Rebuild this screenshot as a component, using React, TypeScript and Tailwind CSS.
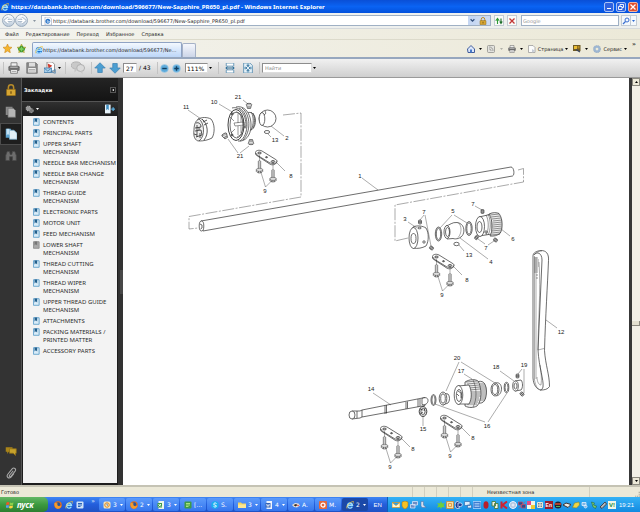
import type { ReactNode } from "react";

const UI = "font-['DejaVu_Sans','Liberation_Sans',sans-serif]";

const bookmarks = [
  "CONTENTS",
  "PRINCIPAL PARTS",
  "UPPER SHAFT MECHANISM",
  "NEEDLE BAR MECHANISM",
  "NEEDLE BAR CHANGE MECHANISM",
  "THREAD GUIDE MECHANISM",
  "ELECTRONIC PARTS",
  "MOTOR UNIT",
  "FEED MECHANISM",
  "LOWER SHAFT MECHANISM",
  "THREAD CUTTING MECHANISM",
  "THREAD WIPER MECHANISM",
  "UPPER THREAD GUIDE MECHANISM",
  "ATTACHMENTS",
  "PACKING MATERIALS / PRINTED MATTER",
  "ACCESSORY PARTS",
];
const CURRENT = "LOWER SHAFT MECHANISM";

/* ---------- small icons ---------- */

function Ico({ children, className = "size-2" }: { children: ReactNode; className?: string }) {
  return (
    <svg viewBox="0 0 16 16" className={`${className} shrink-0`} aria-hidden="true">
      {children}
    </svg>
  );
}

function IeLogo({ className = "size-2" }: { className?: string }) {
  return (
    <Ico className={className}>
      <circle cx="8" cy="8.500" r="6.500" fill="#1d6fd0" />
      <path d="M12.500 11.500A5 5 0 1 1 13 8.500H4.500" fill="none" stroke="#9fdcff" strokeWidth="2.600" />
      <path d="M2 15C-1 12 6 2 14.500 1c1.500 0 1.500 2 .3 4" fill="none" stroke="#f5c63c" strokeWidth="1.500" />
    </Ico>
  );
}

function IePage() {
  return (
    <Ico>
      <path d="M2 0h9l4 4v12H2z" fill="#fff" stroke="#8a93a8" />
      <path d="M11 10.500A3.800 3.800 0 1 1 11.500 8H5" fill="none" stroke="#2673c8" strokeWidth="2.400" />
    </Ico>
  );
}

function Lock({ className = "size-2" }: { className?: string }) {
  return (
    <Ico className={className}>
      <path d="M4.500 8V4.500a3.500 3.500 0 0 1 7 0V8" fill="none" stroke="#b98d2a" strokeWidth="2" />
      <rect x="2" y="7" width="12" height="8.500" rx="1" fill="#d7a632" stroke="#8f6a19" />
      <path d="M8 9.500v3.500" stroke="#6b4c10" strokeWidth="1.600" />
    </Ico>
  );
}

function Printer({ className = "size-3" }: { className?: string }) {
  return (
    <Ico className={className}>
      <path d="M4 1h8v5H4z" fill="#eee" stroke="#666" />
      <rect x="0.500" y="5" width="15" height="7" rx="2" fill="#6d6d6d" />
      <path d="M3 7h10" stroke="#bbb" strokeWidth="1.500" />
      <path d="M3.500 10h9v5h-9z" fill="#f5f5f5" stroke="#666" />
      <path d="M5 12.500h6" stroke="#888" />
    </Ico>
  );
}

function Firefox() {
  return (
    <Ico>
      <circle cx="8" cy="8" r="7.500" fill="#e2701b" />
      <circle cx="8.500" cy="6.500" r="4" fill="#27549b" />
      <path d="M1 4c3-2 4 1 7 1-2 1-2 4 1 5s4 0 6-1c-1 4-4 6.500-7 6.500S0 12 1 4" fill="#f29b2f" />
    </Ico>
  );
}

function Arrow({ up = false, className = "size-3" }: { up?: boolean; className?: string }) {
  return (
    <Ico className={className}>
      <path
        d={up ? "M8 1l7 7h-4v6H5V8H1z" : "M8 15l7-7h-4V2H5v6H1z"}
        fill="#4c9fd2"
        stroke="#3f83b3"
        strokeWidth="1"
      />
    </Ico>
  );
}

function Caret({ color = "fill-black" }: { color?: string }) {
  return (
    <svg viewBox="0 0 6 4" className={`w-[3px] h-0.5 shrink-0 ${color}`} aria-hidden="true">
      <path d="M0 0h6L3 4z" />
    </svg>
  );
}

function BookmarkIcon({ gray = false }: { gray?: boolean }) {
  return (
    <Ico className="w-[7px] h-2">
      <path d="M1 0.500h13v15H1z" fill={gray ? "#a9a9a9" : "#d9ecf8"} stroke={gray ? "#8d8d8d" : "#5d9fca"} strokeWidth="2" />
      <path d="M3.500 0h6v9l-3-3-3 3z" fill={gray ? "#767676" : "#225f8c"} />
    </Ico>
  );
}

function Sep() {
  return <span className="h-3 w-px shrink-0 bg-[#c3c3c3]" />;
}

/* ---------- browser chrome ---------- */

function TitleBar() {
  return (
    <header className="flex h-[13px] items-center gap-0.5 bg-linear-to-b from-[#0a4fd6] via-[#0a63f3] to-[#0350dc] pr-0.5 pl-px">
      <IeLogo />
      <h1 className="flex-1 truncate font-['Noto_Sans','Liberation_Sans',sans-serif] text-[6px] leading-[10px] font-bold text-white">
        https://databank.brother.com/download/596677/New-Sapphire_PR650_pl.pdf - Windows Internet Explorer
      </h1>
      <div className="flex gap-0.5">
        <button aria-label="Свернуть" className="flex size-2.5 items-end rounded-[2px] border border-[#a9c2f5] bg-[#2f62df] p-0.5">
          <span className="h-px w-1 bg-white" />
        </button>
        <button aria-label="Восстановить" className="size-2.5 rounded-[2px] border border-[#a9c2f5] bg-[#2f62df]">
          <Ico>
            <path d="M6 6V3h7v6h-3M3 7h7v6H3z" fill="none" stroke="#fff" strokeWidth="1.800" />
          </Ico>
        </button>
        <button aria-label="Закрыть" className="size-2.5 rounded-[2px] border border-[#efb3a2] bg-[#df5030]">
          <Ico>
            <path d="M3 3l10 10M13 3L3 13" stroke="#fff" strokeWidth="2.500" />
          </Ico>
        </button>
      </div>
    </header>
  );
}

function RoundNav({ label, flip = false }: { label: string; flip?: boolean }) {
  return (
    <button aria-label={label} className="size-[13px] shrink-0 rounded-full border border-[#9aabbd] bg-linear-to-b from-white to-[#bccbdb]">
      <svg viewBox="0 0 16 16" className="size-[11px]" aria-hidden="true">
        <path
          d={flip ? "M3 8h9M8 4l4.500 4L8 12" : "M13 8H4M8 4L3.500 8 8 12"}
          fill="none"
          stroke="#93a6ba"
          strokeWidth="4"
        />
        <path
          d={flip ? "M3 8h9M8 4l4.500 4L8 12" : "M13 8H4M8 4L3.500 8 8 12"}
          fill="none"
          stroke="#fff"
          strokeWidth="2.400"
        />
      </svg>
    </button>
  );
}

function AddressBar() {
  return (
    <div className="flex h-4 items-center border-b border-[#d5d9dc] bg-[#eef0ee] px-0.5">
      <RoundNav label="Назад" />
      <RoundNav label="Вперед" flip />
      <button aria-label="Последние страницы" className="flex w-[13px] justify-center">
        <Caret color="fill-[#8994a0]" />
      </button>
      <div className="flex h-[11px] flex-1 items-center border border-[#9fb0c4] bg-white pl-0.5">
        <IePage />
        <input
          aria-label="Адрес"
          className="h-full min-w-0 flex-1 bg-transparent pl-px text-[5px] leading-[9px] text-[#222] outline-none"
          defaultValue="https://databank.brother.com/download/596677/New-Sapphire_PR650_pl.pdf"
        />
        <button aria-label="Показать адреса" className="flex h-full w-2 items-center justify-center bg-[#c6d7f3]">
          <Ico className="size-[5px]">
            <path d="M2 4l6 6 6-6" fill="none" stroke="#33517f" strokeWidth="4" />
          </Ico>
        </button>
        <button aria-label="Сведения о безопасности" className="flex h-full w-[14px] items-center justify-center bg-[#cbdaf2]">
          <Lock />
        </button>
      </div>
      <button aria-label="Обновить" className="ml-[3px] flex h-[11px] w-2.5 items-center justify-center border border-[#c3cbd3] bg-[#fafbf9]">
        <Ico>
          <path d="M5 14V4M1.500 7.500L5 3l3.500 4.500" fill="none" stroke="#2d9a35" strokeWidth="2.200" />
          <path d="M12 3v9M9.500 9l2.500 4 2.500-4" fill="none" stroke="#1d6e2b" strokeWidth="2.200" />
        </Ico>
      </button>
      <button aria-label="Остановить" className="ml-[3px] flex h-[11px] w-2.5 items-center justify-center border border-[#c3cbd3] bg-[#fafbf9]">
        <Ico>
          <path d="M3 3l10 10M13 3L3 13" stroke="#c23535" strokeWidth="2.600" />
        </Ico>
      </button>
      <input
        aria-label="Поиск"
        placeholder="Google"
        className="ml-1 h-[11px] w-[98px] border border-[#9fb0c4] bg-white pl-px text-[5px] leading-[9px] outline-none placeholder:text-[#9a9a9a]"
      />
      <button aria-label="Найти" className="ml-0.5 flex h-[11px] w-2.5 items-center justify-center border border-[#c3cbd3] bg-[#f4f8fc]">
        <Ico>
          <circle cx="10" cy="6" r="4" fill="none" stroke="#3a6fd0" strokeWidth="2" />
          <path d="M7 9l-5 5" stroke="#3a6fd0" strokeWidth="2.500" />
        </Ico>
      </button>
      <button aria-label="Параметры поиска" className="mr-px flex h-[11px] w-1.5 items-center justify-center border border-l-0 border-[#c3cbd3] bg-[#f4f8fc]">
        <Caret color="fill-[#2f6bd2]" />
      </button>
    </div>
  );
}

function MenuBar() {
  return (
    <nav className="flex h-[11px] items-center gap-[7px] border-b border-[#dcdacb] bg-linear-to-r from-[#f3f3ee] to-[#ece9d8] pl-[5px] text-[5px] leading-2 text-[#222]">
      {["Файл", "Редактирование", "Переход", "Избранное", "Справка"].map((m) => (
        <button key={m}>{m}</button>
      ))}
    </nav>
  );
}

function TabRow() {
  return (
    <div className="flex h-[19px] items-end border-b-2 border-[#97a7be] bg-linear-to-r from-[#f3f3ee] to-[#ece9d8] text-[5px] leading-2 text-[#222]">
      <div className="flex h-full flex-1 items-end">
        <button aria-label="Избранное" className="mb-1 ml-[3px]">
          <Ico className="size-[9px]">
            <path d="M8 0l2.300 5.300L16 6l-4.300 3.700L13 15.500 8 12.500l-5 3 1.300-5.800L0 6l5.700-.7z" fill="#f5b52e" stroke="#c9851a" />
          </Ico>
        </button>
        <button aria-label="Добавить в избранное" className="mb-1 ml-[5px]">
          <Ico className="size-[9px]">
            <path d="M8 0l2.300 5.300L16 6l-4.300 3.700L13 15.500 8 12.500l-5 3 1.300-5.800L0 6l5.700-.7z" fill="#eec643" stroke="#9c9a2a" />
            <path d="M6 4h4v3h3v4h-3v3H6v-3H3V7h3z" fill="#7fd35f" stroke="#2f8a2a" strokeWidth="1.500" />
          </Ico>
        </button>
        <button className="ml-1.5 flex h-[15px] w-[150px] items-center rounded-t-[2px] border border-b-0 border-[#8fa3c4] bg-linear-to-b from-[#f3f8fe] to-[#bcd6f8] pl-0.5">
          <IeLogo />
          <span>https://databank.brother.com/download/596677/Ne…</span>
        </button>
        <button aria-label="Новая вкладка" className="h-[14px] w-[14px] rounded-t-[2px] border border-b-0 border-[#a5b1c6] bg-linear-to-b from-[#f5f7fc] to-[#ccd5e8]" />
      </div>
      <div className="flex h-full items-center gap-[5px] pr-1">
        <button aria-label="Домой" className="flex items-center gap-1">
          <Ico>
            <path d="M1 8l7-7 7 7v7H2z" fill="#dbe6fa" stroke="#405c9b" strokeWidth="2" />
            <path d="M6 9h4v6H6z" fill="#4779c8" />
          </Ico>
          <Caret />
        </button>
        <button aria-label="Каналы" className="flex items-center gap-[5px]">
          <Ico>
            <rect x="1" y="1" width="14" height="14" rx="2" fill="#e2e2de" stroke="#8c8c88" strokeWidth="1.500" />
            <path d="M4 4c5 0 8 3 8 8M4 8c3 0 4 1 4 4" fill="none" stroke="#8f8f8b" strokeWidth="1.600" />
          </Ico>
          <Caret color="fill-[#b0b0a8]" />
        </button>
        <button aria-label="Печать" className="flex items-center gap-1">
          <Printer className="size-2" />
          <Caret />
        </button>
        <button className="flex items-center gap-0.5">
          <Ico>
            <path d="M1 1h9l4 4v10H1z" fill="#fbfbfb" stroke="#999" strokeWidth="1.500" />
            <path d="M8 8l7 4-7 3z" fill="#c5ccd6" />
          </Ico>
          Страница
          <Caret />
        </button>
        <button aria-label="Research" className="flex items-center gap-1">
          <Ico>
            <rect width="15" height="12" fill="#6e5a23" />
            <path d="M2 2h6v6H2z" fill="#e8bb33" />
            <path d="M9 2h4v5H9z" fill="#b88b1f" />
            <path d="M6 9l8 5" stroke="#37455f" strokeWidth="2.500" />
          </Ico>
          <Caret />
        </button>
        <button className="flex items-center gap-0.5">
          <Ico>
            <circle cx="8" cy="8" r="5" fill="none" stroke="#9db6d2" strokeWidth="4.500" />
            <circle cx="8" cy="8" r="7.500" fill="none" stroke="#7d94b0" strokeDasharray="2 2" />
          </Ico>
          Сервис
          <Caret />
        </button>
        <span className="self-start text-[6px] font-bold">»</span>
      </div>
    </div>
  );
}

/* ---------- document viewer ---------- */

function PdfToolbar() {
  return (
    <div className="flex h-[19px] items-center border-b border-[#9a9a9a] bg-linear-to-b from-[#f1f1f1] to-[#cfcfcf] pl-[3px] text-[6px] leading-2">
      <Sep />
      <button aria-label="Печать" className="ml-1">
        <Printer />
      </button>
      <button aria-label="Сохранить" className="ml-1.5">
        <Ico className="size-3">
          <path d="M1 1h12l2 2v12H1z" fill="#8b8b8b" stroke="#6f6f6f" />
          <path d="M4 1h8v5H4z" fill="#ddd" />
          <path d="M3 8h10v6H3z" fill="#eee" />
          <path d="M4 10h8M4 12h8" stroke="#999" />
        </Ico>
      </button>
      <button aria-label="Отправить" className="ml-1.5 flex items-center gap-0.5">
        <Ico className="size-3">
          <path d="M4 0h7l3 3v10H4z" fill="#fff" stroke="#777" />
          <path d="M5 2l6 3-5 4z" fill="#d13c2e" />
          <path d="M0 8h10v6H0z" fill="#a9cfea" stroke="#3d78a8" />
          <path d="M0 8l5 4 5-4M9 13l6-3v5z" fill="none" stroke="#3d78a8" />
        </Ico>
        <Caret />
      </button>
      <span className="w-1" />
      <Sep />
      <button aria-label="Комментарии" className="ml-[5px]" disabled>
        <Ico className="size-[14px]">
          <ellipse cx="6" cy="5" rx="6" ry="4" fill="#c9c9c9" stroke="#aaa" />
          <ellipse cx="11" cy="8" rx="4.500" ry="4" fill="#dadada" stroke="#aaa" />
          <path d="M4 8v5l4-4M11 12l2 3v-4" fill="#c4c4c4" />
        </Ico>
      </button>
      <span className="w-1.5" />
      <Sep />
      <button aria-label="Предыдущая страница" className="ml-0.5">
        <Arrow up />
      </button>
      <button aria-label="Следующая страница" className="ml-[3px]">
        <Arrow />
      </button>
      <input
        aria-label="Номер страницы"
        defaultValue="27"
        className="ml-0.5 h-2.5 w-[14px] border border-[#8d8d8d] border-r-[#ddd] border-b-[#ddd] bg-white pl-0.5 text-[6px] leading-2 outline-none"
      />
      <span className="ml-0.5 w-[18px] whitespace-pre">/ 43</span>
      <Sep />
      <button aria-label="Уменьшить" className="ml-0.5">
        <Ico className="size-[9px]">
          <circle cx="8" cy="8" r="7" fill="#5caadb" stroke="#b4d4e8" />
          <path d="M4 8h8" stroke="#123f60" strokeWidth="2.500" />
        </Ico>
      </button>
      <button aria-label="Увеличить" className="ml-[3px]">
        <Ico className="size-[9px]">
          <circle cx="8" cy="8" r="7" fill="#5caadb" stroke="#b4d4e8" />
          <path d="M4 8h8M8 4v8" stroke="#123f60" strokeWidth="2.500" />
        </Ico>
      </button>
      <input
        aria-label="Масштаб"
        defaultValue="111%"
        className="ml-1 h-2.5 w-[23px] border border-[#8d8d8d] border-r-[#ddd] border-b-[#ddd] bg-white pl-px text-[6px] leading-2 outline-none"
      />
      <button aria-label="Выбрать масштаб" className="mr-1.5 flex w-1 justify-end">
        <Caret />
      </button>
      <Sep />
      <button aria-label="По ширине" className="ml-1.5">
        <Ico className="size-2.5">
          <path d="M2 0h12v5H2zM2 11h12v5H2z" fill="#fff" stroke="#6798b8" strokeWidth="1.500" />
          <path d="M1 8h14M4 6L1.500 8 4 10M12 6l2.500 2L12 10" fill="none" stroke="#286b98" strokeWidth="1.500" />
        </Ico>
      </button>
      <button aria-label="Страница целиком" className="ml-2">
        <Ico className="size-2.5">
          <path d="M1 0h10l4 4v12H1z" fill="#e5f1f8" stroke="#6798b8" strokeWidth="1.500" />
          <path d="M8 1v4M8 11v4M2 8h4M10 8h4M6 3l2 3 2-3M6 13l2-3 2 3M4 6l2 2-2 2M12 6l-2 2 2 2" fill="none" stroke="#286b98" strokeWidth="1.500" />
        </Ico>
      </button>
      <span className="w-1.5" />
      <Sep />
      <input
        aria-label="Найти"
        placeholder="Найти"
        className="ml-0.5 h-2.5 w-[50px] border border-[#8d8d8d] border-r-[#ddd] border-b-[#ddd] bg-white pl-0.5 text-[5px] leading-2 outline-none placeholder:text-[#8f8f8f]"
      />
      <button aria-label="Параметры поиска" className="flex w-1 justify-end">
        <Caret />
      </button>
    </div>
  );
}

function Rail() {
  return (
    <div className="flex w-[21px] flex-col items-center bg-[#333] pt-1.5">
      <button aria-label="Защита">
        <Lock className="size-3" />
      </button>
      <button aria-label="Страницы" className="mt-2.5">
        <Ico className="size-3">
          <path d="M1 1h9v11H1z" fill="#8b8b8b" />
          <path d="M4 3h7l3 3v9H4z" fill="#b5b5b5" stroke="#6c6c6c" />
        </Ico>
      </button>
      <button aria-label="Закладки" className="my-[5px] flex h-[22px] w-full items-center justify-center border-y border-l border-[#4c4c4c] bg-[#1e1e1e]">
        <Ico className="size-3">
          <path d="M1 1h7v12H1z" fill="#5aa2cf" />
          <path d="M6 3h6l4 4v8H6z" fill="#e1f0f9" stroke="#77afd0" />
          <path d="M2 1h4v9l-2-2-2 2z" fill="#c4e2f4" />
        </Ico>
      </button>
      <button aria-label="Поиск">
        <Ico className="size-3">
          <path d="M1 14V7l2-5h3l1 4h2l1-4h3l2 5v7h-5V9H6v5z" fill="#6d6d6d" stroke="#484848" />
        </Ico>
      </button>
      <button aria-label="Комментарии" className="mt-auto">
        <Ico className="size-3">
          <path d="M1 3h9v6H5l-2 3V9H1z" fill="#a98419" />
          <path d="M6 5h9v6h-1v3l-3-3H6z" fill="#c7a22c" stroke="#8d6e16" />
        </Ico>
      </button>
      <button aria-label="Вложения" className="mt-2.5 mb-1.5">
        <Ico className="size-3">
          <path
            d="M11 5l-5 6c-1 1.500 1 3 2 1.500l5.500-7c2-3-1.500-5.500-4-3l-6 7.500c-2 3 1.500 6.500 4.500 3.500l4-5"
            fill="none"
            stroke="#a9a9a9"
            strokeWidth="1.400"
          />
        </Ico>
      </button>
    </div>
  );
}

function BookmarksPanel() {
  return (
    <aside className="flex w-[97px] flex-col border-l border-[#555] bg-[#1d1d1d] pb-0.5">
      <div className="flex h-6 items-center justify-between border-b border-[#555] bg-linear-to-b from-[#242424] to-[#141414] px-0.5">
        <h2 className="text-[5px] leading-2 font-bold text-white">Закладки</h2>
        <button aria-label="Свернуть панель" className="flex size-1.5 items-center justify-center border border-[#555]">
          <svg viewBox="0 0 4 4" className="size-0.5">
            <path d="M4 0v4L0 2z" fill="#fff" />
          </svg>
        </button>
      </div>
      <div className="flex h-[14px] shrink-0 items-center justify-between bg-linear-to-b from-[#303030] to-[#1d1d1d] px-[3px]">
        <button aria-label="Параметры" className="flex items-center gap-0.5">
          <Ico className="size-[9px]">
            <circle cx="6" cy="6" r="4" fill="#999" stroke="#aaa" strokeWidth="2" strokeDasharray="2 1" />
            <circle cx="11" cy="10" r="3.500" fill="#777" stroke="#999" strokeWidth="2" strokeDasharray="2 1" />
          </Ico>
          <Caret color="fill-white" />
        </button>
        <button aria-label="Новая закладка">
          <Ico className="size-2.5">
            <path d="M0 1h9v14H0z" fill="#e7f3fa" />
            <path d="M2 1h4v9L4 8l-2 2z" fill="#3f8fc2" />
            <path d="M13 5v6M10 8h6" stroke="#5aaee0" strokeWidth="2" />
          </Ico>
        </button>
      </div>
      <ul className="mx-px flex flex-1 flex-col gap-[3px] bg-[#f3f3f3] pt-0.5">
        {bookmarks.map((b) => (
          <li key={b}>
            <a
              href="#page"
              className="flex gap-[3px] pl-2.5 font-['Noto_Sans','Liberation_Sans',sans-serif] text-[6px] leading-2 text-[#2b2b2b]"
            >
              <BookmarkIcon gray={b === CURRENT} />
              <span className="-mr-1 max-w-[74px]">{b}</span>
            </a>
          </li>
        ))}
      </ul>
    </aside>
  );
}

/* ---------- exploded view ---------- */

function Screw({ x, y }: { x: number; y: number }) {
  return (
    <g transform={`translate(${x} ${y})`} strokeWidth=".5">
      <path d="M-1.200 0v8M1.200 0v8M-1.200 0h2.400M-1.200 2h2.400M-1.200 4h2.400M-1.200 6h2.400" />
      <path d="M-3.200 8.500c0-1.500 6.400-1.500 6.400 0v2c-1.500 2-5 2-6.400 0zM-3 9.500c1 1 5 1 6 0M-1 10v2M1.200 10v2" fill="#ddd" />
    </g>
  );
}

function Plate({ x, y, lx = 31, ly = 24 }: { x: number; y: number; lx?: number; ly?: number }) {
  // fixing plate with its two screws and the 8 / 9 callouts
  return (
    <g transform={`translate(${x} ${y})`}>
      <path d="M-.5 1.500C-.5-.5 3-1.500 6 0l14.500 9c1.500 2 0 3.500-3.500 3.500L14 12 1 4z" fill="#fff" />
      <path d="M-.5 2c0 2 1 2.500 2 3l13 8.500c3 .8 6 0 6-3" />
      <ellipse cx="3.500" cy="2" rx="1.800" ry="1" fill="#bbb" />
      <ellipse cx="17" cy="10.500" rx="1.800" ry="1" fill="#bbb" />
      <ellipse cx="10.500" cy="6.200" rx="1" ry=".6" fill="#777" />
      <Screw x={3.5} y={10} />
      <Screw x={17} y={19} />
      <g strokeWidth=".4">
        <path d="M3.500 4v6M17 13v6M21 12l8 8M5 21.500l4.500 14.500 6-6" />
      </g>
      <Num x={lx} y={ly + 3}>8</Num>
      <Num x={9} y={42}>9</Num>
    </g>
  );
}

function Num({ x, y, children }: { x: number; y: number; children: ReactNode }) {
  return (
    <text x={x} y={y} textAnchor="middle" fontSize="6" fill="#222" stroke="none">
      {children}
    </text>
  );
}

function SetScrew({ x, y, r = 0 }: { x: number; y: number; r?: number }) {
  return (
    <g transform={`translate(${x} ${y}) rotate(${r})`} strokeWidth=".6">
      <rect x="-1.500" y="-2" width="3" height="4" rx="1" fill="#ccc" />
      <path d="M-1.500-.7h3M-1.500.7h3" />
    </g>
  );
}

function CapScrew({ x, y, r = 0 }: { x: number; y: number; r?: number }) {
  return (
    <g transform={`translate(${x} ${y}) rotate(${r})`} strokeWidth=".6">
      <ellipse cy="-1.500" rx="2.700" ry="1.200" fill="#bbb" />
      <path d="M-2.500-1l1 3.500h3l1-3.500M-1.500 1h3" fill="#ddd" />
    </g>
  );
}

function ExplodedView() {
  return (
    <svg
      viewBox="123 78 506 407"
      preserveAspectRatio="xMinYMin meet"
      className="min-h-0 w-full flex-1 bg-white font-['Liberation_Sans',Arial,sans-serif]"
      fill="none"
      stroke="#2e2e2e"
      strokeWidth=".7"
      strokeLinejoin="round"
      role="img"
      aria-label="LOWER SHAFT MECHANISM"
    >
      {/* assembly paths */}
      <g strokeWidth=".5" strokeDasharray="12 1.500 2 1.500" stroke="#555">
        <path d="M283 115l18-2v84l-112 19.500V229l9-1" />
        <path d="M518 170l5.500-1.500V182L395 205v36l13-3" />
      </g>

      {/* main shaft (1) */}
      <path d="M201 221L511 167c3 0 4 8 1.500 9L203 231z" fill="#fff" />
      <ellipse cx="201.500" cy="226" rx="2.300" ry="5" fill="#fff" />
      <path d="M200 224l2 1v3l-1.500 1" />

      {/* cam (11) */}
      <g>
        <path d="M198 119c4-2 9-2 13 0 4 5 4 14 1 19-4 2-8 3-13 3z" fill="#fff" />
        <path d="M199 119c5 3 7 17 0 22-4 0-6-5-5-11 0-6 2-10 5-11z" fill="#eee" />
        <path d="M202 119c6 5 7 15 2 21M196 123c3-1 5 1 5 4l-6 1M195 131l6-1 1 5-6 2M197 125v12M199 127v3M200 133v5M203 122l4-2M204 125l4-2M194 134l3 1" strokeWidth=".8" />
      </g>

      {/* flange (10) */}
      <g>
        <path d="M247 113c4-2 8 1 8.500 7 0 7-3 11-7 10" fill="#fff" />
        <path d="M251 112c3 4 3 13 0 18M253 113c2 4 2 11 0 15" />
        <path d="M236 107c9-2 15 7 15 18s-6 17-13 16" fill="#fff" />
        <path d="M239 108c11 5 10 28 1 33M242 108c9 7 9 24 1 32M232 108c7-2 14 5 14 18" />
        <ellipse cx="236" cy="125" rx="8" ry="15.500" fill="#fff" strokeWidth=".9" />
        <ellipse cx="236.500" cy="125" rx="6.500" ry="13" />
        <path d="M234 123l10-1v3l-9 1zM238 114v9M241 115v7M238 126v9M241 126v7M230 117l4 4M231 133l4-4M236 112l5 3M237 137l5-3" strokeWidth=".5" />
        <circle cx="232" cy="114" r="1" fill="#888" />
        <circle cx="232" cy="135" r="1" fill="#888" />
        <circle cx="245" cy="127" r="1" />
      </g>
      <CapScrew x={249} y={106} />
      <CapScrew x={225} y={136} r={-30} />
      <CapScrew x={251} y={142} r={180} />

      {/* ball (2) */}
      <circle cx="267.500" cy="118.500" r="8.500" fill="#fff" />
      <ellipse cx="262" cy="119" rx="2.800" ry="6.500" fill="#fff" />
      <path d="M264 115c2-1 2-2 1-4" />
      <ellipse cx="267" cy="132" rx="2.700" ry="1.500" />

      {/* collar (3) */}
      <path d="M413 227c4-2 10-1 13 1 3 5 3 13 0 18-4 2-8 3-13 2z" fill="#fff" />
      <ellipse cx="413.500" cy="238" rx="4.500" ry="10.500" fill="#fff" />
      <ellipse cx="413.500" cy="238.500" rx="2.500" ry="5" />
      <circle cx="424" cy="242" r="1.200" />
      <ellipse cx="419.500" cy="228" rx="1.800" ry=".8" />
      <SetScrew x={420} y={222} />
      <SetScrew x={431.500} y={248} r={-55} />

      {/* o-rings (5) and ball sleeve (4) */}
      <ellipse cx="438.500" cy="234" rx="3.200" ry="7" />
      <ellipse cx="438.500" cy="234" rx="2.200" ry="5.800" />
      <ellipse cx="469" cy="228.500" rx="3.200" ry="7" />
      <ellipse cx="469" cy="228.500" rx="2.200" ry="5.800" />
      <path d="M446 226c4-1 6-4 11-3.500 7 1 8 8 6 12-2 4-7 5-10 4l-6 .5" fill="#fff" />
      <path d="M458 222.500c4 3 4 11 0 15" strokeWidth=".4" />
      <ellipse cx="447" cy="232" rx="3" ry="6.500" fill="#fff" />
      <ellipse cx="447.500" cy="232" rx="2" ry="4.500" />
      <ellipse cx="456.500" cy="244" rx="2.700" ry="1.700" />

      {/* pinion (6) */}
      <path d="M479 217l13-3v20l-13 2z" fill="#fff" />
      <ellipse cx="480" cy="226.500" rx="4.500" ry="10" fill="#fff" />
      <ellipse cx="479.500" cy="227" rx="2.500" ry="5.500" />
      <path d="M489 214c4-2 8-1.500 10-.5 4 5 4 16 1 20-3 2-6 3-10 2.500 3-5 3-16-1-22z" fill="#eee" />
      <path d="M490 215l9-1M491 217l9-1M492 219l9-1M493 221l9-1M493 223l9-1M493 225l9-1M493 227l9-1M493 229l9-1M492 231l9-1M492 233l9-1M491 235l9-1M486 215c3 5 3 15 0 20M488 214c3 6 3 16 0 21" strokeWidth=".5" />
      <circle cx="486" cy="232" r="1.200" />
      <SetScrew x={482.500} y={211.500} />
      <SetScrew x={476.500} y={237.500} r={35} />
      <SetScrew x={495.500} y={240} r={-55} />

      {/* belt (12) */}
      <path d="M533 256c0-3 3-5 8-5.500 5 0 8 3 7.500 10-1 25-3 55-4 90 1 15 5 24 5 36-2 3-5 3.500-9 3.500-4-1-7-5-7.500-12z" fill="#fff" />
      <path d="M534 255c3-4 8-2 8 5-1 30-3 60-4 90 1 18 6 30 5 37-1 3-2 3-3 3" />
      <path d="M534.500 256v124c1 5 2 7 4 9M536 257v122M542 251c-3 0-5 1-7 3M539 262c2 30-1 60-1 88M540 365c1 7 2 14 1 20-2 0-4-3-4-8M538 350l6-1.500" strokeWidth=".4" />
      <path d="M534 258h4M534 260h5M534 262h5M534 264h5M534 266h5M534 268h4M534 270h4M534 272h4M536 275h2M536 278h2" strokeWidth=".5" />

      {/* lower shaft (14) */}
      <path d="M352 411l8 0 2-1 63-12.500v8L362 417l-2 1-8 1z" fill="#fff" />
      <ellipse cx="352" cy="415" rx="3" ry="4" fill="#fff" />
      <path d="M357 411v7M362 410v7M385 405.500v8.500M386.500 405v8.500M406 402v7M407.500 401.500v7M418 399v8M420 399v7" />
      <path d="M422 398.500c3-1.500 6-1 6 2s-3 5-6 4z" fill="#fff" />

      {/* retaining ring (15) and washer (16) */}
      <ellipse cx="423" cy="411.500" rx="3.800" ry="5" fill="#ddd" strokeWidth=".9" />
      <ellipse cx="423" cy="411.500" rx="2" ry="3" fill="#fff" />
      <path d="M420 409l3 1M420 414l3-2M425 408l-1 3" />
      <ellipse cx="433.500" cy="400" rx="2.500" ry="5.500" />
      <ellipse cx="433.500" cy="400" rx="1.600" ry="4.300" />

      {/* bushings (20) */}
      <path d="M442 393l6 1c2 2 2 7 0 9l-5 2" fill="#fff" />
      <ellipse cx="443" cy="398.500" rx="3.800" ry="6.500" fill="#fff" />
      <ellipse cx="443" cy="398.500" rx="2.300" ry="4.600" />
      <path d="M495 383c4-1 6 1 6.500 5 0 5-2 7-5 8" fill="#fff" />
      <ellipse cx="495" cy="389.500" rx="4" ry="6.500" fill="#fff" />
      <ellipse cx="495" cy="389.500" rx="2.700" ry="5" />

      {/* gear (17) */}
      <path d="M477 382c5-2 9 0 9.500 9 0 9-3 13-8 12z" fill="#eee" />
      <path d="M478 384h7M479 386h7M479 388h7.500M479 390h7.500M479 392h7.500M479 394h7.500M479 396h7M479 398h7M478 400h7" strokeWidth=".5" />
      <path d="M465 382c5-3 10-3 13-1 4 7 4 20-1 25-4 2-8 2-12 0z" fill="#eee" />
      <path d="M466 382l11-1M467 384l11-1M468 386l11-1M469 388l11-1M469 390l11-1M470 392h10M470 394h10M470 396h10M469 398h10M469 400h10M468 402h10M467 404h10M473 380c4 8 4 20 0 27" strokeWidth=".5" />
      <path d="M458 386l11-1c3 6 3 14 0 19l-11 0z" fill="#fff" />
      <ellipse cx="458.500" cy="395" rx="4.300" ry="9.500" fill="#fff" />
      <ellipse cx="459" cy="395.500" rx="2.700" ry="6" />
      <path d="M458 391l3 2v5M457 394l2 2" />

      {/* washer (16), collar (18), set screws (19) */}
      <ellipse cx="506.500" cy="387.500" rx="2.300" ry="5.200" />
      <ellipse cx="506.500" cy="387.500" rx="1.500" ry="4" />
      <path d="M515 381l6-1c2 2 2 8 0 10l-6 1z" fill="#fff" />
      <ellipse cx="515.500" cy="386" rx="2.800" ry="5" fill="#fff" />
      <ellipse cx="515.500" cy="386" rx="1.500" ry="3" />
      <SetScrew x={517.500} y={376} />
      <SetScrew x={522} y={394} r={-40} />

      {/* leaders */}
      <g strokeWidth=".4">
        <path d="M188 110l16 11M219 104l15 9M243 100l5 4M238 153l-10-14M240 153l9-7M271 126l13 10M268 134l3 3M362 178l16 12" />
        <path d="M408 222l9 6M424 215l-4 5M425 215l6 31M452 215l-12 13M454 215l13 8M460 238l28 21M459 245l5 6M501 229l9 7M475 206l7 4M478 239l7 5M488 245l6-4" />
        <path d="M546 320l11 8M373 393l18 12M423 417v9M435 404l50 18M488 422l19-29M459 362l-13 29M461 362l34 21M464 374l8 5M500 371l14 10M522 369l-4 5M524 369v24" />
      </g>

      <Num x={186} y={109}>11</Num>
      <Num x={214} y={104}>10</Num>
      <Num x={238} y={99}>21</Num>
      <Num x={287} y={140}>2</Num>
      <Num x={275} y={142}>13</Num>
      <Num x={240} y={158}>21</Num>
      <Num x={360} y={178}>1</Num>
      <Num x={405} y={221}>3</Num>
      <Num x={424} y={214}>7</Num>
      <Num x={453} y={213}>5</Num>
      <Num x={473} y={206}>7</Num>
      <Num x={513} y={241}>6</Num>
      <Num x={486} y={250}>7</Num>
      <Num x={469} y={257}>13</Num>
      <Num x={491} y={264}>4</Num>
      <Num x={561} y={334}>12</Num>
      <Num x={371} y={391}>14</Num>
      <Num x={423} y={431}>15</Num>
      <Num x={487} y={428}>16</Num>
      <Num x={461} y={373}>17</Num>
      <Num x={496} y={369}>18</Num>
      <Num x={524} y={367}>19</Num>
      <Num x={457} y={360}>20</Num>

      <Plate x={256} y={151} lx={35} />
      <Plate x={433} y={255} lx={34} />
      <Plate x={381} y={427} lx={32} ly={21} />
      <Plate x={441} y={416} lx={32} ly={21} />
    </svg>
  );
}

function ScrollBar() {
  return (
    <div className="flex w-2 flex-col bg-[#f2f0e7]">
      <button aria-label="Вверх" className="flex h-2 w-full items-center justify-center border border-[#8c8a80] bg-[#ece9d8]">
        <Caret color="rotate-180 fill-black" />
      </button>
      <div className="grow-[61]" />
      <div className="h-[5px] border-r border-b border-[#8c8a80] bg-[#e3e0d0]" />
      <div className="grow-[39]" />
      <button aria-label="Вниз" className="flex h-2 w-full items-center justify-center border border-[#8c8a80] bg-[#ece9d8]">
        <Caret />
      </button>
    </div>
  );
}

function StatusBar() {
  return (
    <footer className="flex h-3 items-stretch border-t-2 border-[#c5c3b4] bg-[#ece9d8] text-[5px] leading-2 text-[#222]">
      <span className="flex-1 pt-px pl-px">Готово</span>
      {[0, 1, 2, 3, 4].map((i) => (
        <span key={i} className="w-3 border-l border-[#d2cfbf]" />
      ))}
      <span className="w-[117px] border-l border-[#d2cfbf] pt-px pl-3.5">Неизвестная зона</span>
      <span className="flex w-[51px] items-end justify-end border-l border-[#d2cfbf]">
        <Ico className="size-1.5">
          <path d="M14 2v12H2" fill="none" stroke="#aaa798" strokeWidth="3" strokeDasharray="3 2" />
        </Ico>
      </span>
    </footer>
  );
}

/* ---------- taskbar ---------- */

const box = (fill: string, mark: string) => (
  <Ico>
    <rect x="1" y="1" width="14" height="14" rx="2" fill={fill} />
    <path d="M4 5h8M4 8h8M4 11h5" stroke={mark} strokeWidth="2" />
  </Ico>
);

const tasks: { icon: ReactNode; text: string; menu?: boolean; active?: boolean }[] = [
  {
    icon: (
      <Ico>
        <rect x="1" y="1" width="14" height="14" rx="3" fill="#f7e7bd" />
        <circle cx="8" cy="8" r="4.500" fill="none" stroke="#e08a28" strokeWidth="2" />
        <path d="M8 5v3l2 1" fill="none" stroke="#3d6dac" strokeWidth="1.500" />
      </Ico>
    ),
    text: "3",
    menu: true,
  },
  { icon: <Firefox />, text: "2", menu: true },
  {
    icon: (
      <Ico>
        <path d="M3 0h11v16H3z" fill="#eaf6ea" />
        <path d="M1 4h9v9H1z" fill="#3f9d4a" />
        <path d="M3 6l5 5M8 6l-5 5" stroke="#fff" strokeWidth="1.800" />
      </Ico>
    ),
    text: "3",
    menu: true,
  },
  { icon: box("#3f9b46", "#a8e27e"), text: "[…" },
  {
    icon: (
      <Ico>
        <circle cx="8" cy="8" r="7.500" fill="#19aef0" />
        <path d="M11 5C9 3 5 4 5.500 6.500S11 8 11 10s-4 3-6 .5" fill="none" stroke="#fff" strokeWidth="2" />
      </Ico>
    ),
    text: "S.",
  },
  {
    icon: (
      <Ico>
        <path d="M0 3h6l2 2h8v9H0z" fill="#f4d35f" />
        <path d="M0 7h16v7H0z" fill="#fbe694" />
      </Ico>
    ),
    text: "3",
    menu: true,
  },
  {
    icon: (
      <Ico>
        <path d="M3 0h11v16H3z" fill="#eef3fc" />
        <path d="M1 4h10v9H1z" fill="#3563b5" />
        <path d="M3 6l1.500 5L6 7l1.500 4L9 6" fill="none" stroke="#fff" strokeWidth="1.300" />
      </Ico>
    ),
    text: "4",
    menu: true,
  },
  {
    icon: (
      <Ico>
        <path d="M0 8l6-4 7 1 3 4-6 4-6-1z" fill="#e9e4db" />
        <path d="M3 8l5-2 3 2-4 3z" fill="#3a2a22" />
        <circle cx="12" cy="9" r="1.500" fill="#d33" />
      </Ico>
    ),
    text: "А.",
  },
  {
    icon: (
      <Ico>
        <rect width="16" height="16" rx="2" fill="#e46a3c" />
        <circle cx="8" cy="8" r="4" fill="none" stroke="#fff" strokeWidth="2.500" />
      </Ico>
    ),
    text: "М.",
  },
  { icon: <IeLogo />, text: "2", menu: true, active: true },
];

const tray: ReactNode[] = [
  <path d="M0 3h16v10H0zM0 3l8 6 8-6" fill="#fdf6d4" stroke="#d59a2c" strokeWidth="1.500" />,
  <path d="M8 0l6 2v7c0 3-3 6-6 7-3-1-6-4-6-7V2z" fill="#f5c227" stroke="#a66f0c" />,
  <path d="M5 1h10v7H5zM1 7h9v7H1z" fill="#6d8dc4" stroke="#dbe7fb" strokeWidth="1.500" />,
  <path d="M4 1h5v7l5 5H6l-2-3z" fill="#d3dded" stroke="#4a6aa4" />,
  null,
  <path d="M8 0l2 5 6-1-3 4 3 5-6-1-2 4-2-4-6 1 3-5-3-4 6 1z" fill="#6fcf3a" />,
  <path d="M1 1h14v14H1zM5 5h6v6H5z" fill="#f6dfa3" stroke="#d9892c" strokeWidth="1.500" />,
  <path d="M8 0a8 8 0 1 0 0 16V11h3a3 3 0 0 0 0-7H6v8" fill="#1f3f96" stroke="#e5edff" strokeWidth="1.500" />,
  <path d="M1 1h11v8H1zM7 8h8v6H7z" fill="#dcecfb" stroke="#3672b4" strokeWidth="1.500" />,
  <path d="M0 1h16v14H0zM3 5h10M3 8h10M3 11h10" fill="#3c7bd0" stroke="#b4d8fc" strokeWidth="1.500" />,
  <ellipse cx="8" cy="8" rx="5" ry="7.500" fill="#b9202c" />,
  <path d="M2 1h7v9H2zM7 5h7v10H7z" fill="#f4f4e8" stroke="#498040" strokeWidth="1.800" />,
  <path d="M3 1v14M14 1L5 8l9 7" fill="none" stroke="#cf2330" strokeWidth="4" />,
  <path d="M8 1a7 7 0 1 0 .1 0M8 5v6M5 8h6" fill="#b4c6df" stroke="#eff5ff" strokeWidth="2" />,
  <path d="M1 2h8v6H1zM7 7h8v7H7zM2 15L14 1" fill="#304c8d" stroke="#c24b65" strokeWidth="1.500" />,
  <g>
    <path d="M0 0h16v16H0z" fill="#f2f6e6" />
    <path d="M0 0h8v8H0z" fill="#e34a86" />
    <path d="M8 8h8v8H8z" fill="#efcb34" />
  </g>,
  <path d="M3 3h10v10H3zM3 8h10M8 3v10" fill="#74849b" stroke="#e9e7d7" strokeWidth="2" />,
];

const trayAfterLang: ReactNode[] = [
  <g>
    <circle cx="8" cy="8" r="7" fill="#1e2433" />
    <path d="M2 6h12" stroke="#df4a31" strokeWidth="3" />
    <path d="M4 11h8" stroke="#55b05a" strokeWidth="2" />
  </g>,
  <path d="M0 8l6-4 10 3-6 6z" fill="#f1ece2" stroke="#3a3230" strokeWidth="2" />,
  <path d="M1 13l4-9 9-2 1 6-6 6z" fill="#f0d445" stroke="#7a7d22" />,
  <path d="M2 3h8v6H2zM9 8a3 3 0 1 0 .1 0" fill="#7fb5e6" stroke="#e8f4ff" strokeWidth="1.500" />,
  <path d="M3 2l6 2-2 4 6 2-2 5-5-3z" fill="#7ccc72" stroke="#1a5b2a" />,
  <path d="M2 12L12 2l3 4L6 15z" fill="#b5b7ba" stroke="#414650" strokeWidth="2" />,
];

function TrayIcons({ icons }: { icons: ReactNode[] }) {
  return (
    <>
      {icons.map((icon, i) => (icon ? <Ico key={i}>{icon}</Ico> : <span key={i} className="w-2" />))}
    </>
  );
}

function Taskbar() {
  return (
    <div className="flex h-[15px] items-stretch bg-linear-to-b from-[#3f86f4] via-[#245edb] to-[#1f52c4] text-[6px] leading-2 text-white">
      <button className="flex w-12 items-center gap-[3px] rounded-r-[5px] bg-linear-to-b from-[#63b765] via-[#3c9a3f] to-[#2d7e31] pl-1.5">
        <Ico>
          <path d="M1 3c2-2 4-1 6 0L6 8C4 7 3 7 0 8z" fill="#f0562a" />
          <path d="M8 3c2 1 4 1 7 0l-1 5c-3 1-5 1-7 0z" fill="#8bd04a" />
          <path d="M0 9c2-1 4-1 6 0l-1 5c-2-1-4-1-6 0z" fill="#5b9bf4" />
          <path d="M7 9c2 1 4 1 7 0l-1 5c-3 1-5 1-7 0z" fill="#fbd23f" />
        </Ico>
        <span className="font-['Noto_Sans',sans-serif] text-[8px] leading-2 font-bold italic">пуск</span>
      </button>
      <div className="flex w-[51px] items-center gap-[3px] pl-1.5">
        <button aria-label="Firefox">
          <Firefox />
        </button>
        <button aria-label="Internet Explorer">
          <IeLogo />
        </button>
        <button aria-label="Почта">{box("#cfe2f8", "#2c64b8")}</button>
        <span className="ml-auto self-start pr-1">»</span>
      </div>
      <div className="flex flex-1 items-stretch gap-px py-px">
        {tasks.map((t, i) => (
          <button
            key={i}
            className={`flex w-[26px] items-center gap-0.5 rounded-[2px] pl-1 ${t.active ? "bg-[#1b49a8]" : "bg-linear-to-b from-[#5c9bfb] to-[#3576ee]"}`}
          >
            {t.icon}
            <span className="flex-1 text-left">{t.text}</span>
            {t.menu && (
              <span className="pr-0.5">
                <Caret color="fill-white" />
              </span>
            )}
          </button>
        ))}
      </div>
      <span className="flex w-[18px] items-center justify-center font-['Liberation_Sans',sans-serif]">EN</span>
      <div className="flex items-center gap-px border-l border-[#0d5fb5] bg-linear-to-b from-[#35b2f6] to-[#118ae0] pr-1.5 pl-1 font-['Liberation_Sans',sans-serif]">
        <TrayIcons icons={tray} />
        <span className="bg-[#9c1b2c] px-px text-[5px] font-bold">En</span>
        <TrayIcons icons={trayAfterLang} />
        <span className="bg-[#f0f6e8] px-px font-bold text-[#178a3c]">V!</span>
        <time className="pl-0.5">19:21</time>
      </div>
    </div>
  );
}

export default function App() {
  return (
    <div className={`flex min-h-screen flex-col overflow-hidden bg-[#ece9d8] text-black ${UI}`}>
      <TitleBar />
      <AddressBar />
      <MenuBar />
      <TabRow />
      <PdfToolbar />
      <main className="flex flex-1 items-stretch">
        <Rail />
        <BookmarksPanel />
        <div className="flex w-[5px] items-center bg-[#333]">
          <span className="ml-0.5 h-6 w-[3px] bg-[#484848]" />
        </div>
        <section id="page" className="flex flex-1 flex-col border-r-[3px] border-[#383838] bg-white">
          <ExplodedView />
        </section>
        <ScrollBar />
      </main>
      <StatusBar />
      <Taskbar />
    </div>
  );
}
